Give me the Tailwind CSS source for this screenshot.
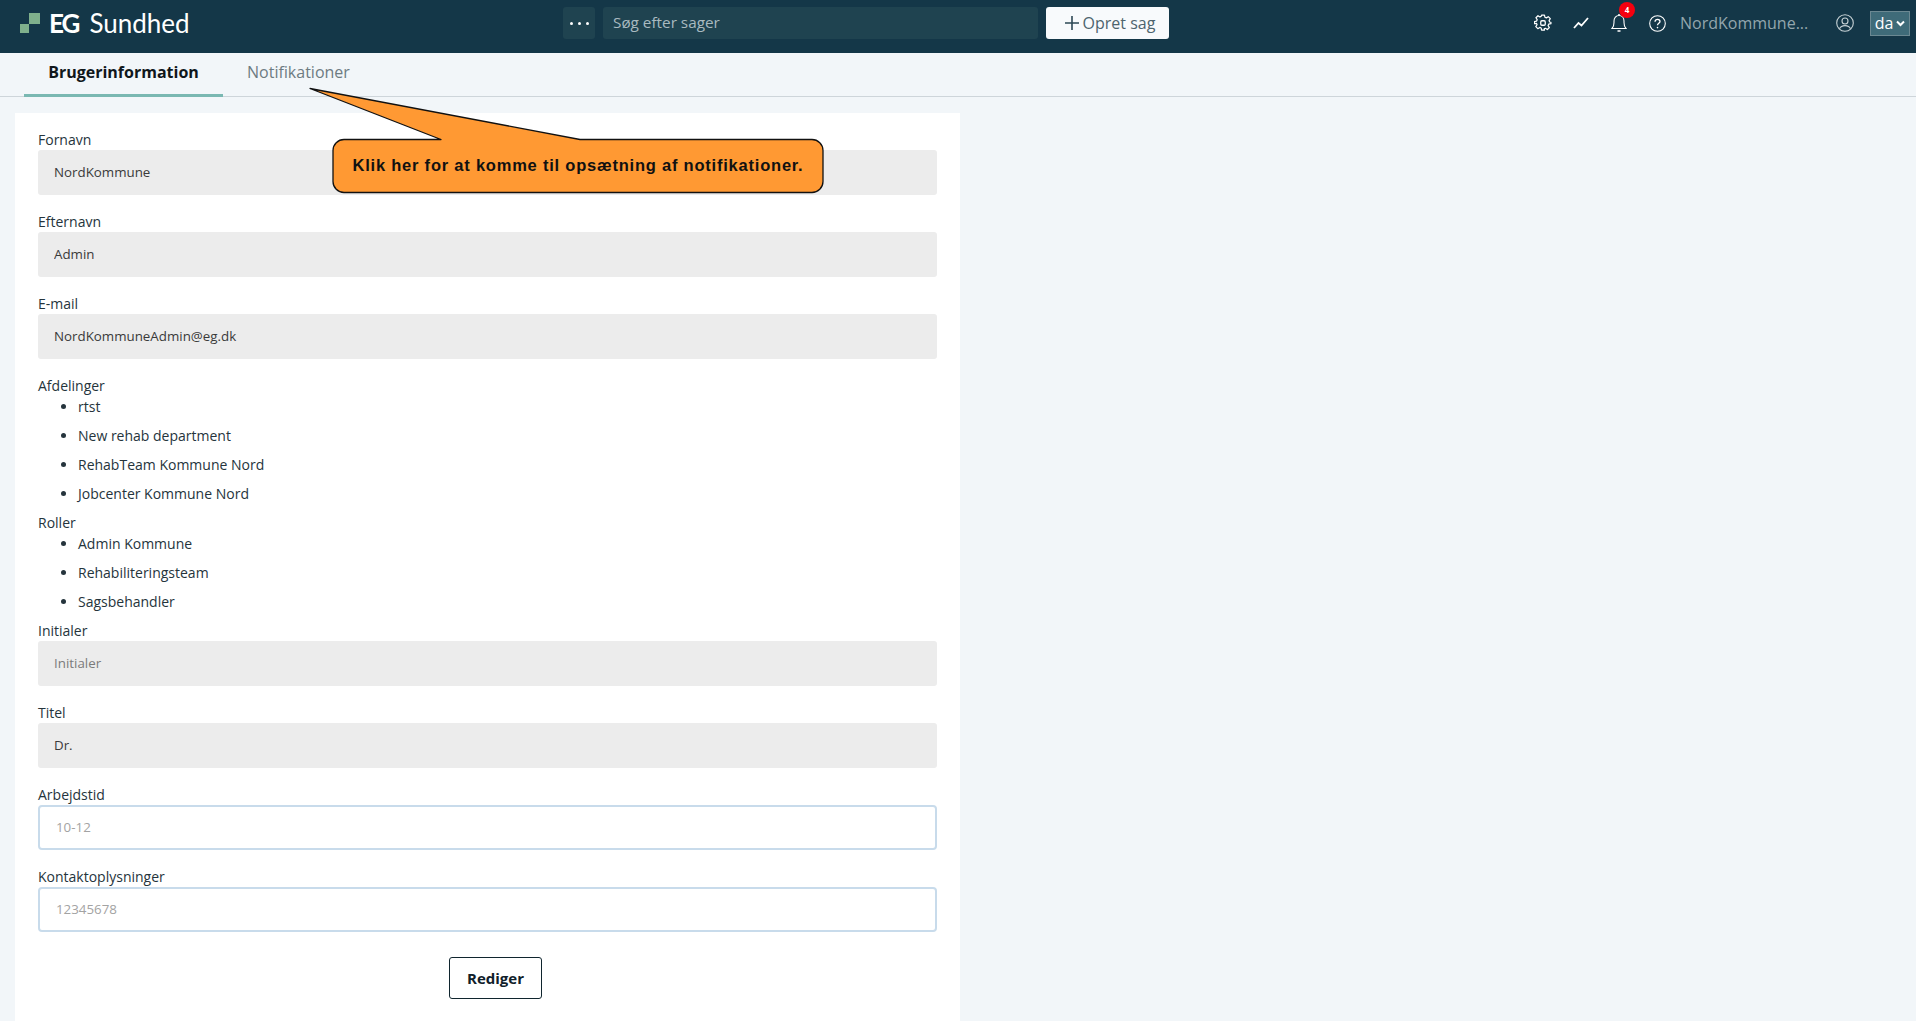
<!DOCTYPE html>
<html lang="en">
<head>
    <meta charset="UTF-8">
    <meta name="viewport" content="width=device-width, initial-scale=1.0">
    <title>EG Sundhed - Brugerinformation</title>
    <script src="https://cdn.jsdelivr.net/npm/@tailwindcss/browser@4"></script>
</head>
<body class="bg-[#f2f6f9] font-['Open_Sans',sans-serif] text-sm text-[#25343c]">
<div class="relative h-[1021px] overflow-hidden flex flex-col">

    <!-- Header -->
    <header class="h-[53px] shrink-0 bg-[#143748] flex items-center pb-[7px] relative">
        <div class="w-[563px] shrink-0 flex items-center pl-5">
            <svg class="w-[20px] h-[20px]" viewBox="0 0 20 20"><rect x="0" y="11" width="9" height="9" fill="#7fb08c"/><rect x="9" y="0" width="11" height="11" fill="#7fb08c"/></svg>
            <span class="ml-[9px] font-['Lato',sans-serif] text-[26px] leading-none font-bold tracking-[-2px] text-white">EG</span>
            <span class="ml-[11px] font-['Lato',sans-serif] text-[26px] leading-none text-white">Sundhed</span>
        </div>
        <button class="w-[32px] h-[32px] rounded-[3px] bg-[#1f4350] flex items-center justify-center gap-[5px]">
            <span class="w-[3px] h-[3px] rounded-full bg-white"></span>
            <span class="w-[3px] h-[3px] rounded-full bg-white"></span>
            <span class="w-[3px] h-[3px] rounded-full bg-white"></span>
        </button>
        <div class="ml-2 w-[435px] h-[32px] rounded-[3px] bg-[#1f4350] flex items-center pl-[10px] text-[15.300px] text-[#a9bac0]">Søg efter sager</div>
        <button class="ml-2 w-[123px] h-[32px] rounded-[3px] bg-[#f8fafc] flex items-center justify-center gap-[3px] pl-[4px] text-[16px] text-[#4d646e]">
            <svg class="w-[16px] h-[16px]" viewBox="0 0 16 16" fill="none" stroke="#2d4854" stroke-width="1.6"><path d="M8 1v14M1 8h14"/></svg>
            Opret sag
        </button>
        <div class="ml-auto flex items-center pr-[6px]">
            <!-- gear -->
            <svg class="w-[18px] h-[18px] text-white" viewBox="0 0 24 24" fill="none" stroke="currentColor" stroke-width="1.7" stroke-linejoin="round"><path d="M10 2h4l.7 3.1 1.9.8 2.7-1.7 2.8 2.8-1.7 2.7.8 1.9L23 12v0l0 2-3.1.7-.8 1.9 1.7 2.7-2.8 2.8-2.7-1.7-1.6.7L14 23h-4l-.6-3.1-1.9-.7-2.7 1.7-2.8-2.8 1.7-2.7-.8-1.9L0 14v-3l3.1-.7.8-1.9-1.7-2.7L5 2.9l2.7 1.7 1.7-.7z" transform="translate(.5 -.5) scale(.96)"/><rect x="9" y="9" width="6" height="6" rx="1.5"/></svg>
            <!-- chart -->
            <svg class="ml-[21px] w-[16px] h-[12px]" viewBox="0 0 16 12" fill="none" stroke="#fff" stroke-width="1.8"><path d="M1 11l4.500-5 3 2.500L15 1"/></svg>
            <!-- bell -->
            <div class="relative ml-[22px] w-[16px] h-[20px]">
                <svg class="w-[16px] h-[20px]" viewBox="0 0 16 20" fill="none" stroke="#fff" stroke-width="1.1"><path d="M1 15.500h14c-1.500-1.500-2-3-2-6V8c0-3-2-5.500-5-5.500S3 5 3 8v1.500c0 3-.500 4.500-2 6z"/><path d="M8 1v1.500M6.500 18h3" stroke-width="1.500"/></svg>
                <span class="absolute -top-[11px] left-[8px] w-[16px] h-[16px] rounded-full bg-[#f5000f] text-white text-[8px] font-bold flex items-center justify-center">4</span>
            </div>
            <!-- help -->
            <svg class="ml-[22px] w-[17px] h-[17px]" viewBox="0 0 17 17" fill="none" stroke="#fff" stroke-width="1.100"><circle cx="8.500" cy="8.500" r="7.800"/><path d="M6 6.700c0-1.500 1.100-2.400 2.500-2.400s2.500.9 2.500 2.200c0 1.800-2.500 1.800-2.500 3.700" stroke-width="1.300"/><circle cx="8.500" cy="12.600" r=".8" fill="#fff" stroke="none"/></svg>
            <span class="ml-[14px] w-[128px] text-[16px] font-medium text-[#93a6ad] whitespace-nowrap">NordKommune...</span>
            <!-- user -->
            <svg class="ml-[28px] w-[18px] h-[18px]" viewBox="0 0 18 18" fill="none" stroke="#c6d1d5" stroke-width="1.100"><circle cx="9" cy="9" r="8.300"/><circle cx="9" cy="7" r="3"/><path d="M3.500 14.800c1-2.400 3-3.200 5.500-3.200s4.500.8 5.500 3.200"/></svg>
            <div class="ml-[16px] w-[40px] h-[25px] bg-[#3f6b79] border border-[#6b8892] flex items-center justify-center gap-[3px] text-[16px] text-white">
                da
                <svg class="w-[9px] h-[7px]" viewBox="0 0 9 7" fill="none" stroke="#fff" stroke-width="2"><path d="M1 1.500l3.500 3.500L8 1.500"/></svg>
            </div>
        </div>
    </header>

    <!-- Tabs -->
    <nav class="h-[44px] shrink-0 border-b border-[#ced5da] flex pl-6 text-[16px]">
        <a class="w-[199px] h-[44px] border-b-[3px] border-[#7ab8b2] flex items-center justify-center pb-[3px] font-bold text-[#10171b]">Brugerinformation</a>
        <a class="ml-[24px] h-[43px] flex items-center pb-[4px] text-[#6d7b82]">Notifikationer</a>
    </nav>

    <!-- User info card -->
    <main class="mt-4 ml-[15px] w-[945px] flex-1 bg-white px-[23px] pt-4">
        <div class="mb-4">
            <label class="block leading-[21px]">Fornavn</label>
            <input readonly value="NordKommune" class="block w-full h-[45px] rounded-[3px] bg-[#ececec] px-4 pb-[1px] text-[13.330px] text-[#3a3a3a] outline-none">
        </div>
        <div class="mb-4">
            <label class="block leading-[21px]">Efternavn</label>
            <input readonly value="Admin" class="block w-full h-[45px] rounded-[3px] bg-[#ececec] px-4 pb-[1px] text-[13.330px] text-[#3a3a3a] outline-none">
        </div>
        <div class="mb-4">
            <label class="block leading-[21px]">E-mail</label>
            <input readonly value="NordKommuneAdmin@eg.dk" class="block w-full h-[45px] rounded-[3px] bg-[#ececec] px-4 pb-[1px] text-[13.330px] text-[#3a3a3a] outline-none">
        </div>

        <label class="block leading-[21px]">Afdelinger</label>
        <ul class="list-disc pl-10">
            <li class="leading-[21px] mb-2">rtst</li>
            <li class="leading-[21px] mb-2">New rehab department</li>
            <li class="leading-[21px] mb-2">RehabTeam Kommune Nord</li>
            <li class="leading-[21px] mb-2">Jobcenter Kommune Nord</li>
        </ul>
        <label class="block leading-[21px]">Roller</label>
        <ul class="list-disc pl-10">
            <li class="leading-[21px] mb-2">Admin Kommune</li>
            <li class="leading-[21px] mb-2">Rehabiliteringsteam</li>
            <li class="leading-[21px] mb-2">Sagsbehandler</li>
        </ul>

        <div class="mb-4">
            <label class="block leading-[21px]">Initialer</label>
            <input readonly placeholder="Initialer" class="block w-full h-[45px] rounded-[3px] bg-[#ececec] px-4 pb-[1px] text-[13.330px] placeholder:text-[#7b7b7b] outline-none">
        </div>
        <div class="mb-4">
            <label class="block leading-[21px]">Titel</label>
            <input readonly value="Dr." class="block w-full h-[45px] rounded-[3px] bg-[#ececec] px-4 pb-[1px] text-[13.330px] text-[#3a3a3a] outline-none">
        </div>
        <div class="mb-4">
            <label class="block leading-[21px]">Arbejdstid</label>
            <input placeholder="10-12" class="block w-full h-[45px] rounded-[4px] border-2 border-[#c8dbeb] bg-white px-4 pb-[1px] text-[13.330px] placeholder:text-[#a3a3a3] outline-none">
        </div>
        <div>
            <label class="block leading-[21px]">Kontaktoplysninger</label>
            <input placeholder="12345678" class="block w-full h-[45px] rounded-[4px] border-2 border-[#c8dbeb] bg-white px-4 pb-[1px] text-[13.330px] placeholder:text-[#a3a3a3] outline-none">
        </div>
        <div class="mt-[25px] flex justify-center pl-4">
            <button class="w-[93px] h-[42px] rounded-[3px] border border-[#10252e] bg-white pt-[1px] text-[15px] font-bold text-[#10202a]">Rediger</button>
        </div>
    </main>

    <!-- Callout over the tabs -->
    <svg class="absolute left-[300px] top-[80px] w-[530px] h-[120px]" viewBox="0 0 530 120">
        <path d="M44 59.500H141L10 8.500 280 59.500H512a11 11 0 0 1 11 11v31a11 11 0 0 1-11 11H44a11 11 0 0 1-11-11v-31a11 11 0 0 1 11-11z" fill="#ff9933" stroke="#111" stroke-width="1.300" stroke-linejoin="round"/>
    </svg>
    <div class="absolute left-[332px] top-[139px] w-[492px] h-[54px] flex items-center justify-center font-['Liberation_Sans',sans-serif] text-[16.500px] font-bold tracking-[0.780px] text-[#111]">Klik her for at komme til opsætning af notifikationer.</div>
</div>
</body>
</html>
